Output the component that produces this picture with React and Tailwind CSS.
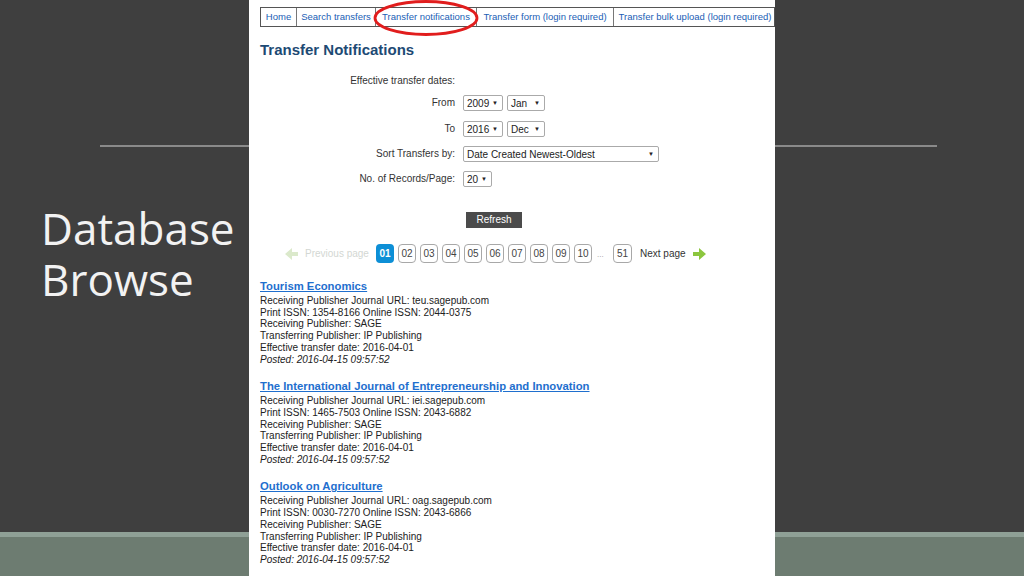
import React from "react";

const tabs = [
  { label: "Home", w: "w-[36px]" },
  { label: "Search transfers", w: "w-[79px]" },
  { label: "Transfer notifications", w: "w-[101px]" },
  { label: "Transfer form (login required)", w: "w-[137px]" },
  { label: "Transfer bulk upload (login required)", w: "w-[162px]" },
];

const entries = [
  { title: "Tourism Economics", url: "teu.sagepub.com", print: "1354-8166", online: "2044-0375" },
  {
    title: "The International Journal of Entrepreneurship and Innovation",
    url: "iei.sagepub.com",
    print: "1465-7503",
    online: "2043-6882",
  },
  { title: "Outlook on Agriculture", url: "oag.sagepub.com", print: "0030-7270", online: "2043-6866" },
];

const pages = ["01", "02", "03", "04", "05", "06", "07", "08", "09", "10"];

const Select = ({ className, children }) => (
  <div
    className={`h-[16px] flex items-center justify-between border border-[#aaaaaa] rounded-[2px] bg-white pl-[3px] pr-[4px] text-[10px] text-[#222] ${className}`}
  >
    <span>{children}</span>
    <span className="text-[6px]">▼</span>
  </div>
);

const Arrow = ({ left, faded }) => (
  <svg width="13" height="12" viewBox="0 0 13 12" className={left ? "-scale-x-100" : ""}>
    <path d="M0 4h6V0l7 6-7 6V8H0z" fill={faded ? "#dbe9cb" : "#8cc63e"} />
  </svg>
);

const Row = ({ label, children }) => (
  <div className="flex items-center h-[16px]">
    <div className="w-[195px] text-right -mt-[2px]">{label}</div>
    <div className="ml-[8px] flex gap-[4px]">{children}</div>
  </div>
);

export default function App() {
  return (
    <div className="relative w-[1024px] h-[576px] overflow-hidden bg-[#3f3f3f] flex flex-col">
      {/* slide */}
      <div className="h-[532px] flex flex-col">
        <div className="mt-[145px] ml-[100px] w-[837px] h-[2px] bg-[#8a8a8a]" />
        <div className="mt-[56px] ml-[41px] font-['Open_Sans',sans-serif] text-[44px] leading-[51px] text-[#f2f2f2]">
          <div>Database</div>
          <div>Browse</div>
        </div>
      </div>
      <div className="flex-1 border-t-[5px] border-[#8fa096] bg-[#6d7c71]" />

      {/* screenshot of the web page */}
      <div className="absolute left-[249px] top-0 w-[526px] h-[576px] bg-white font-['Liberation_Sans',Arial,sans-serif] text-[10px] text-[#222] pl-[11px]">
        <div className="mt-[7px] flex h-[20px] border border-[#555]">
          {tabs.map((t, i) => (
            <div
              key={t.label}
              className={`${t.w} shrink-0 flex items-center justify-center text-[9.5px] text-[#215eb5] whitespace-nowrap ${
                i < tabs.length - 1 ? "border-r border-[#777]" : ""
              }`}
            >
              {t.label}
            </div>
          ))}
        </div>

        <svg className="absolute left-[124px] top-0" width="106" height="36" viewBox="0 0 106 36">
          <ellipse cx="53" cy="18" rx="51" ry="16.5" fill="none" stroke="#e11d1d" strokeWidth="2.8" />
        </svg>

        <h1 className="mt-[14px] h-[18px] leading-[18px] text-[15px] font-bold text-[#1d4a74]">
          Transfer Notifications
        </h1>

        <div className="mt-[13px] flex flex-col text-[#333]">
          <div className="flex items-center h-[16px]">
            <div className="w-[195px] text-right">Effective transfer dates:</div>
          </div>
          <div className="mt-[7px]">
            <Row label="From">
              <Select className="w-[40px]">2009</Select>
              <Select className="w-[38px]">Jan</Select>
            </Row>
          </div>
          <div className="mt-[10px] flex flex-col gap-[9px]">
            <Row label="To">
              <Select className="w-[40px]">2016</Select>
              <Select className="w-[38px]">Dec</Select>
            </Row>
            <Row label="Sort Transfers by:">
              <Select className="w-[196px]">Date Created Newest-Oldest</Select>
            </Row>
            <Row label="No. of Records/Page:">
              <Select className="w-[29px]">20</Select>
            </Row>
          </div>
        </div>

        <button className="mt-[25px] ml-[206px] w-[56px] h-[16px] bg-[#4b4b4b] text-white text-[10px] leading-[16px] block">
          Refresh
        </button>

        <div className="mt-[16px] ml-[25px] flex items-center h-[19px]">
          <Arrow left faded />
          <span className="ml-[7px] w-[64px] text-[#d3d7d3]">Previous page</span>
          <div className="ml-[7px] flex gap-[4px]">
            {pages.map((p, i) => (
              <div
                key={p}
                className={`w-[18px] h-[19px] rounded-[4px] flex items-center justify-center ${
                  i === 0 ? "bg-[#0d8fd6] text-white font-bold" : "border border-[#a8a8a8] text-[#444]"
                }`}
              >
                {p}
              </div>
            ))}
          </div>
          <span className="ml-[5px] w-[12px] text-[#999] self-end mb-[2px] text-[8px]">...</span>
          <div className="ml-[4px] w-[19px] h-[19px] rounded-[4px] border border-[#a8a8a8] text-[#444] flex items-center justify-center">
            51
          </div>
          <span className="ml-[8px] text-[#333]">Next page</span>
          <span className="ml-[7px]">
            <Arrow />
          </span>
        </div>

        <div className="mt-[16px]">
          {entries.map((e) => (
            <div key={e.title} className="mb-[14px]">
              <a className="block h-[14px] leading-[14px] text-[11.3px] font-bold text-[#1f6fce] underline underline-offset-[1px]">
                {e.title}
              </a>
              <div className="mt-[2px] leading-[11.7px]">
                <div>Receiving Publisher Journal URL: {e.url}</div>
                <div>
                  Print ISSN: {e.print} Online ISSN: {e.online}
                </div>
                <div>Receiving Publisher: SAGE</div>
                <div>Transferring Publisher: IP Publishing</div>
                <div>Effective transfer date: 2016-04-01</div>
                <div className="italic">Posted: 2016-04-15 09:57:52</div>
              </div>
            </div>
          ))}
        </div>
      </div>
    </div>
  );
}
